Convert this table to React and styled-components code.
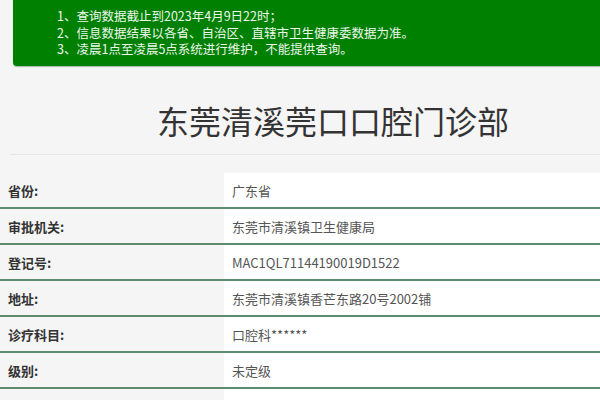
import React from "react";
import styled, { createGlobalStyle } from "styled-components";

const rows = [
  { label: "省份:", value: "广东省" },
  { label: "审批机关:", value: "东莞市清溪镇卫生健康局" },
  { label: "登记号:", value: "MAC1QL71144190019D1522" },
  { label: "地址:", value: "东莞市清溪镇香芒东路20号2002铺" },
  { label: "诊疗科目:", value: "口腔科******" },
  { label: "级别:", value: "未定级" },
  { label: "", value: "" },
];

const App = () => {
  return (
    <Page>
      <GlobalStyle />
      <Notice>
        <li>1、查询数据截止到2023年4月9日22时；</li>
        <li>2、信息数据结果以各省、自治区、直辖市卫生健康委数据为准。</li>
        <li>3、凌晨1点至凌晨5点系统进行维护，不能提供查询。</li>
      </Notice>
      <Title>东莞清溪莞口口腔门诊部</Title>
      <InfoTable>
        {rows.map((r, i) => (
          <Row key={i}>
            <Label>{r.label}</Label>
            <Value>{r.value}</Value>
          </Row>
        ))}
      </InfoTable>
    </Page>
  );
};

export default App;

const GlobalStyle = createGlobalStyle`
  body {
    margin: 0;
    background: #f5f5f5;
    font-family: "Noto Sans CJK SC", "Open Sans", sans-serif;
  }
`;

const Page = styled.div`
  width: 600px;
  height: 400px;
  overflow: hidden;
  background: #f5f5f5;
`;

const Notice = styled.ul`
  margin: 0 0 0 13px;
  height: 66px;
  box-sizing: border-box;
  padding: 8px 0 0 44px;
  list-style: none;
  background: #008000;
  border-bottom-left-radius: 4px;
  box-shadow: 0 1px 1px rgba(0, 80, 0, 0.35);
  color: #eef7ee;
  font-size: 12.5px;
  line-height: 16.5px;
`;

const Title = styled.h1`
  margin: 0 0 0 10px;
  height: 89px;
  box-sizing: border-box;
  padding: 34px 0 0 147px;
  font-size: 32px;
  line-height: 40px;
  font-weight: 400;
  color: #333;
  border-bottom: 1px solid #e6e6e6;
`;

const InfoTable = styled.div`
  margin-top: 18px;
  display: flex;
  flex-direction: column;
`;

const Row = styled.div`
  display: grid;
  grid-template-columns: 224px 1fr;
  height: 36px;
  border-bottom: 2px solid #5e8c70;
  box-sizing: border-box;
  font-size: 13px;
`;

const Label = styled.div`
  display: flex;
  align-items: center;
  padding-left: 8px;
  font-weight: 700;
  color: #333;
`;

const Value = styled.div`
  display: flex;
  align-items: center;
  padding-left: 8px;
  background: #fff;
  color: #555;
`;
